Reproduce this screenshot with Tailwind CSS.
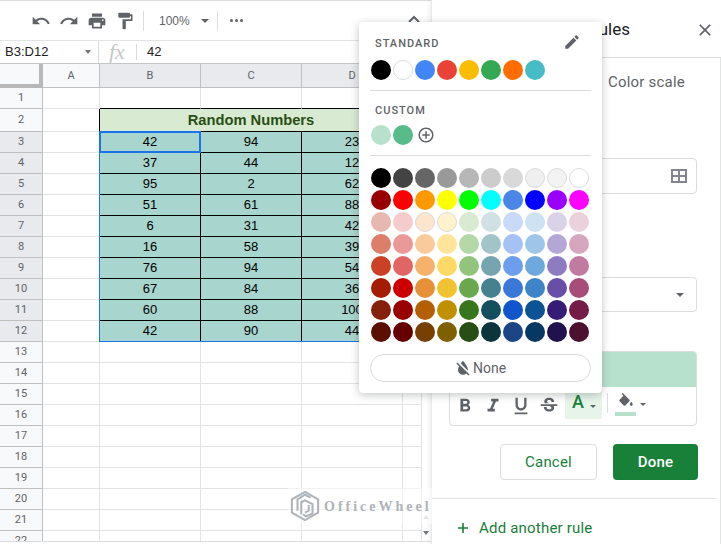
<!DOCTYPE html>
<html lang="en">
<head>
  <meta charset="UTF-8" />
  <title>Conditional format rules</title>
  <script src="https://cdn.jsdelivr.net/npm/@tailwindcss/browser@4"></script>
</head>
<body class="bg-white">
  <div class="relative flex w-[721px] h-[544px] overflow-hidden bg-white font-['Roboto',sans-serif] text-[#3c4043]">

    <!-- sheet side -->
    <div class="flex flex-col w-[431px] shrink-0">
      <!-- toolbar -->
      <div class="flex items-center h-[40px] border-t border-[#dadce0] text-[#5f6368]">
        <svg class="ml-[31px] w-[20px] h-[20px]" viewBox="0 0 24 24" fill="#5f6368"><path d="M12.5 8c-2.65 0-5.05.99-6.9 2.6L2 7v9h9l-3.62-3.62c1.39-1.16 3.16-1.88 5.12-1.88 3.54 0 6.55 2.31 7.6 5.5l2.37-.78C21.08 11.03 17.15 8 12.5 8z"/></svg>
        <svg class="ml-[8px] w-[20px] h-[20px]" viewBox="0 0 24 24" fill="#5f6368"><path d="M18.4 10.6C16.55 8.99 14.15 8 11.5 8c-4.65 0-8.58 3.03-9.96 7.22L3.9 16c1.05-3.19 4.05-5.5 7.6-5.5 1.95 0 3.73.72 5.12 1.88L13 16h9V7l-3.6 3.6z"/></svg>
        <svg class="ml-[8px] w-[20px] h-[20px]" viewBox="0 0 24 24" fill="#5f6368"><path d="M19 8H5c-1.66 0-3 1.34-3 3v6h4v4h12v-4h4v-6c0-1.66-1.34-3-3-3zm-3 11H8v-5h8v5zm3-7c-.55 0-1-.45-1-1s.45-1 1-1 1 .45 1 1-.45 1-1 1zm-1-9H6v4h12V3z"/></svg>
        <svg class="ml-[8px] w-[20px] h-[20px]" viewBox="0 0 24 24" fill="#5f6368"><path d="M18 4V3c0-.55-.45-1-1-1H5c-.55 0-1 .45-1 1v4c0 .55.45 1 1 1h12c.55 0 1-.45 1-1V6h1v4H9v11c0 .55.45 1 1 1h2c.55 0 1-.45 1-1v-9h8V4h-3z"/></svg>
        <div class="ml-[8px] w-px h-[20px] bg-[#dadce0]"></div>
        <span class="ml-[15px] w-[31px] text-[12px] font-['Liberation_Sans',sans-serif]">100%</span>
        <span class="ml-[11px] w-0 h-0 border-x-[4px] border-x-transparent border-t-[4px] border-t-[#5f6368] border-solid"></span>
        <div class="ml-[8px] w-px h-[20px] bg-[#dadce0]"></div>
        <span class="ml-[12px] flex gap-[2px]">
          <span class="w-[3px] h-[3px] rounded-full bg-[#5f6368]"></span>
          <span class="w-[3px] h-[3px] rounded-full bg-[#5f6368]"></span>
          <span class="w-[3px] h-[3px] rounded-full bg-[#5f6368]"></span>
        </span>
        <svg class="ml-[164px] mb-[3px] w-[14px] h-[14px]" viewBox="0 0 14 14" fill="none" stroke="#5f6368" stroke-width="2"><path d="M2 10l5-5 5 5"/></svg>
      </div>
      <!-- formula bar -->
      <div class="flex items-center h-[23px] border-t border-[#e2e3e3] text-[13px] font-['Liberation_Sans',sans-serif] text-[#202124]">
        <span class="ml-[5px] w-[80px]">B3:D12</span>
        <span class="w-0 h-0 border-x-[3px] border-x-transparent border-t-[4px] border-t-[#70757a] border-solid"></span>
        <div class="ml-[7px] w-px h-[22px] bg-[#dadce0]"></div>
        <span class="ml-[10px] w-[27px] text-[22px] leading-[22px] italic text-[#c4c6c8] font-['Liberation_Serif',serif]">fx</span>
        <div class="w-px h-[16px] bg-[#dadce0]"></div>
        <span class="ml-[10px]">42</span>
      </div>
      <!-- grid -->
      <div class="flex h-[478px] overflow-hidden border-t border-[#c4c7c5]">
        <div class="relative w-[421px] shrink-0">
          <div id="grid" class="grid grid-cols-[43px_57px_101px_101px_101px_19px] text-[13px] leading-[16px] font-['Liberation_Sans',sans-serif] text-[#000]"></div>
          <!-- selected range -->
          <div class="absolute left-[99px] top-[67px] w-[304px] h-[211px] border border-[#1a73e8] border-r-0 border-t-0"></div>
          <div class="absolute left-[99px] top-[67px] w-[102px] h-[22px] border-2 border-[#1a73e8]"></div>
        </div>
        <div class="flex flex-col items-center w-[10px] pt-[451px] gap-[12px]">
          <span class="w-0 h-0 border-x-[3px] border-x-transparent border-b-[4px] border-b-[#c4c7c5] border-solid"></span>
          <span class="w-0 h-0 border-x-[3px] border-x-transparent border-t-[4px] border-t-[#70757a] border-solid"></span>
        </div>
      </div>
      <div class="h-[3px] border-t border-[#dadce0]"></div>
    </div>

    <!-- right panel -->
    <div class="flex flex-col w-[290px] h-[544px] border-l border-[#e8eaed] shadow-[-2px_0_4px_rgba(60,64,67,0.08)]">
      <div class="flex items-center h-[58px] border-b border-[#dadce0]">
        <span class="mt-[3px] w-[198px] text-right text-[17px] text-[#202124] font-normal whitespace-nowrap">Conditional format rules</span>
        <svg class="ml-[65px] w-[20px] h-[20px] mt-[2px]" viewBox="0 0 24 24" fill="#5f6368"><path d="M19 6.41L17.59 5 12 10.59 6.41 5 5 6.41 10.59 12 5 17.59 6.41 19 12 13.41 17.59 19 19 17.59 13.41 12z"/></svg>
      </div>
      <div class="flex flex-col flex-1 border-r border-[#e2e3e3]">
        <div class="h-[46px] pl-[176px] pt-[14px] text-[15px] leading-[20px] tracking-[0.2px] text-[#5f6368]">Color scale</div>
        <!-- range input -->
        <div class="flex items-center justify-end ml-[17px] mt-[54px] w-[248px] h-[36px] pr-[8px] border border-[#dadce0] rounded">
          <svg class="w-[18px] h-[18px]" viewBox="0 0 18 18" fill="none" stroke="#80868b" stroke-width="2"><path d="M2 3h14v12H2zM9 3v12M2 9h14"/></svg>
        </div>
        <!-- condition select -->
        <div class="flex items-center justify-end ml-[17px] mt-[83px] w-[248px] h-[35px] pr-[12px] border border-[#dadce0] rounded">
          <span class="w-0 h-0 border-x-[4px] border-x-transparent border-t-[4px] border-t-[#5f6368] border-solid"></span>
        </div>
        <!-- formatting style -->
        <div class="ml-[17px] mt-[39px] w-[248px] h-[75px] border border-[#dadce0] rounded overflow-hidden">
          <div class="h-[35px] bg-[#b7e1cd]"></div>
          <div class="flex items-start h-[38px] text-[#5f6368]">
            <svg class="ml-[4px] mt-[8px] w-[22px] h-[22px]" viewBox="0 0 24 24" fill="#5f6368"><path d="M15.6 10.79c.97-.67 1.65-1.77 1.65-2.79 0-2.26-1.75-4-4-4H7v14h7.04c2.09 0 3.71-1.7 3.71-3.79 0-1.52-.86-2.82-2.15-3.42zM10 6.5h3c.83 0 1.5.67 1.5 1.5s-.67 1.5-1.5 1.5h-3v-3zm3.5 9H10v-3h3.5c.83 0 1.5.67 1.5 1.5s-.67 1.5-1.5 1.5z"/></svg>
            <svg class="ml-[6px] mt-[8px] w-[22px] h-[22px]" viewBox="0 0 24 24" fill="#5f6368"><path d="M10 4v3h2.21l-3.42 8H6v3h8v-3h-2.21l3.42-8H18V4z"/></svg>
            <svg class="ml-[6px] mt-[8px] w-[22px] h-[22px]" viewBox="0 0 24 24" fill="#5f6368"><path d="M12 17c3.31 0 6-2.69 6-6V3h-2.5v8c0 1.93-1.57 3.5-3.5 3.5S8.5 12.93 8.5 11V3H6v8c0 3.31 2.69 6 6 6zm-7 2v2h14v-2H5z"/></svg>
            <svg class="ml-[6px] mt-[8px] w-[22px] h-[22px]" viewBox="0 0 24 24" fill="#5f6368"><path d="M7.24 8.75c-.26-.48-.39-1.03-.39-1.67 0-.61.13-1.16.4-1.67.26-.5.63-.93 1.11-1.29.48-.35 1.05-.63 1.7-.83.66-.19 1.39-.29 2.18-.29.81 0 1.54.11 2.21.34.66.22 1.23.54 1.69.94.47.4.83.88 1.08 1.43.25.55.38 1.15.38 1.81h-3.01c0-.31-.05-.59-.15-.85-.09-.27-.24-.49-.44-.68-.2-.19-.45-.33-.75-.44-.3-.1-.66-.16-1.06-.16-.39 0-.74.04-1.03.13-.29.09-.53.21-.72.36-.19.16-.34.34-.44.55-.1.21-.15.43-.15.66 0 .48.25.88.74 1.21.38.25.77.48 1.41.7H7.39c-.05-.08-.11-.17-.15-.25zM21 12v-2H3v2h9.62c.18.07.4.14.55.2.37.17.66.34.87.51.21.17.35.36.43.57.07.2.11.43.11.69 0 .23-.05.45-.14.66-.09.2-.23.38-.42.53-.19.15-.42.26-.71.35-.29.08-.63.13-1.01.13-.43 0-.83-.04-1.18-.13s-.66-.23-.91-.42c-.25-.19-.45-.44-.59-.75-.14-.31-.25-.76-.25-1.21H6.4c0 .55.08 1.13.24 1.58.16.45.37.85.65 1.21.28.35.6.66.98.92.37.26.78.48 1.22.65.44.17.9.3 1.38.39.48.08.96.13 1.44.13.8 0 1.53-.09 2.18-.28s1.21-.45 1.67-.79c.46-.34.82-.77 1.07-1.27s.38-1.07.38-1.71c0-.6-.1-1.14-.31-1.61-.05-.11-.11-.23-.17-.33H21V12z"/></svg>
            <div class="ml-[5px] flex items-center h-[32px] w-[37px] pl-[7px] bg-[#e6f4ea] text-[#188038]">
              <span class="text-[18px] font-medium leading-[24px] mb-[3px] font-['Roboto',sans-serif]">A</span>
              <span class="ml-[6px] mt-[6px] w-0 h-0 border-x-[3px] border-x-transparent border-t-[3px] border-t-[#5f6368] border-solid"></span>
            </div>
            <div class="ml-[5px] mt-[6px] w-px h-[20px] bg-[#dadce0]"></div>
            <div class="ml-[7px] mt-[6px] flex flex-col w-[21px]">
              <svg class="ml-[2px] w-[18px] h-[18px]" viewBox="0 0 24 24" fill="#5f6368"><path d="M16.56 8.94L7.62 0 6.21 1.41l2.38 2.38-5.15 5.15c-.59.59-.59 1.54 0 2.12l5.5 5.5c.29.29.68.44 1.06.44s.77-.15 1.06-.44l5.5-5.5c.59-.58.59-1.53 0-2.12zM19 11.5s-2 2.17-2 3.5c0 1.1.9 2 2 2s2-.9 2-2c0-1.33-2-3.5-2-3.5z"/></svg>
              <span class="mt-[1px] h-[4px] bg-[#b7e1cd]"></span>
            </div>
            <span class="ml-[4px] mt-[16px] w-0 h-0 border-x-[3px] border-x-transparent border-t-[3px] border-t-[#5f6368] border-solid"></span>
          </div>
        </div>
        <!-- buttons -->
        <div class="flex ml-[68px] mt-[18px] gap-[16px]">
          <button class="w-[97px] h-[36px] border border-[#dadce0] rounded text-[15px] tracking-[0.2px] text-[#188038]">Cancel</button>
          <button class="w-[85px] h-[36px] rounded bg-[#188038] text-[15px] font-medium tracking-[0.2px] text-white">Done</button>
        </div>
        <div class="mt-[18px] w-[284px] border-t border-[#e2e3e3]"></div>
        <div class="flex items-center h-[20px] mt-[19px] pl-[23px] text-[15px] tracking-[0.2px] text-[#188038]">
          <svg class="w-[16px] h-[16px]" viewBox="0 0 16 16" fill="none" stroke="#188038" stroke-width="1.6"><path d="M8 3v10M3 8h10"/></svg>
          <span class="ml-[8px]">Add another rule</span>
        </div>
      </div>
    </div>

    <!-- watermark -->
    <div class="absolute left-[288px] top-[488px] flex items-center w-[144px] h-[36px] bg-white/50">
      <svg class="ml-[2px] w-[30px] h-[34px]" viewBox="0 0 32 34" fill="none" stroke="#afb4ba" stroke-width="2.2">
        <path d="M16 2L30 10V24L16 32L2 24V10Z"/>
        <path d="M22 8L16 5L8 10V22M12 26V13L16 11L24 15V25L17 28L14 26"/>
        <path d="M20 16V22L16 24"/>
      </svg>
      <span class="ml-[4px] text-[14px] font-bold tracking-[3px] text-[#aeb3b9] font-['Liberation_Serif',serif]">OfficeWheel</span>
    </div>

    <!-- colour menu -->
    <div class="absolute left-[359px] top-[22px] w-[243px] h-[371px] bg-white rounded shadow-[0_2px_8px_rgba(60,64,67,0.3)]">
      <div class="flex items-center justify-between h-[42px] pl-[16px] pr-[21px] pt-[3px]">
        <span class="text-[11px] font-medium tracking-[1px] text-[#5f6368]">STANDARD</span>
        <svg class="w-[18px] h-[18px] mb-[6px]" viewBox="0 0 24 24" fill="#5f6368"><path d="M3 17.25V21h3.75L17.81 9.94l-3.75-3.75L3 17.25zM20.71 7.04c.39-.39.39-1.02 0-1.41l-2.34-2.34c-.39-.39-1.02-.39-1.41 0l-1.83 1.83 3.75 3.75 1.83-1.83z"/></svg>
      </div>
      <div id="standard" class="flex gap-[2px] ml-[12px] h-[20px] mt-[-4px]"></div>
      <div class="ml-[11px] mt-[10px] w-[221px] border-t border-[#dadce0]"></div>
      <div class="h-[38px] pl-[16px] pt-[12px] text-[11px] leading-[15px] font-medium tracking-[1px] text-[#5f6368]">CUSTOM</div>
      <div class="flex items-center gap-[2px] ml-[12px] h-[20px] mt-[-4px]">
        <span class="w-[20px] h-[20px] rounded-full bg-[#b7e1cd]"></span>
        <span class="w-[20px] h-[20px] rounded-full bg-[#57bb8a]"></span>
        <svg class="ml-[2px] w-[18px] h-[18px]" viewBox="0 0 24 24" fill="#5f6368"><path d="M13 7h-2v4H7v2h4v4h2v-4h4v-2h-4V7zm-1-5C6.48 2 2 6.48 2 12s4.48 10 10 10 10-4.48 10-10S17.52 2 12 2zm0 18c-4.41 0-8-3.59-8-8s3.59-8 8-8 8 3.59 8 8-3.59 8-8 8z"/></svg>
      </div>
      <div class="ml-[11px] mt-[10px] w-[221px] border-t border-[#dadce0]"></div>
      <div id="palette" class="grid grid-cols-[repeat(10,20px)] gap-[2px] ml-[12px] mt-[12px]"></div>
      <button class="flex items-center justify-center ml-[11px] mt-[12px] w-[221px] h-[28px] border border-[#dadce0] rounded-full text-[14px] text-[#5f6368]">
        <svg class="ml-[-2px] w-[20px] h-[20px]" viewBox="0 0 24 24" fill="#5f6368"><path d="M18 14c0-4-6-10.8-6-10.8s-1.33 1.51-2.73 3.52l8.59 8.59c.09-.42.14-.86.14-1.31zm-.88 3.12L12.5 12.5 5.27 5.27 4 6.55l3.32 3.32C6.55 11.32 6 12.79 6 14c0 3.31 2.69 6 6 6 1.52 0 2.9-.57 3.96-1.5l2.63 2.63 1.27-1.27-2.74-2.74z"/></svg>
        <span>None</span>
      </button>
    </div>
  </div>

  <script>
    const gridEl = document.getElementById("grid");
    const data = [[42,94,23],[37,44,12],[95,2,62],[51,61,88],[6,31,42],[16,58,39],[76,94,54],[67,84,36],[60,88,100],[42,90,44]];
    const head = "flex items-center justify-center border-r border-b border-[#c0c0c0] text-[11px] font-['Roboto',sans-serif] text-[#5f6368]";
    const line = "border-r border-b border-[#e2e3e3]";
    let html = `
      <div class="h-[24px] border-r-4 border-b-4 border-[#b8b8b8] bg-[#f8f9fa]"></div>
      <div class="${head} bg-[#f8f9fa]">A</div>
      <div class="${head} bg-[#e8eaed]">B</div>
      <div class="${head} bg-[#e8eaed]">C</div>
      <div class="${head} bg-[#e8eaed]">D</div>
      <div class="${head} bg-[#f8f9fa]"></div>`;

    // row 1 sits on top of the black table border
    html += `
      <div class="${head} h-[21px] bg-[#f8f9fa]">1</div>
      <div class="${line}"></div>
      <div class="border-r border-b border-[#e2e3e3] border-b-black"></div>
      <div class="border-r border-b border-[#e2e3e3] border-b-black"></div>
      <div class="border-r border-b border-[#e2e3e3] border-b-black"></div>
      <div class="${line}"></div>`;

    html += `
      <div class="${head} h-[23px] bg-[#f8f9fa]">2</div>
      <div class="border-b border-r border-[#e2e3e3] border-r-black"></div>
      <div class="col-span-3 flex items-center justify-center border-r border-b border-black bg-[#d9ead3] text-[14.7px] font-bold text-[#274e13]">Random Numbers</div>
      <div class="${line}"></div>`;

    data.forEach((row, i) => {
      html += `
      <div class="${head} h-[21px] bg-[#e8eaed]">${i + 3}</div>
      <div class="border-b border-r border-[#e2e3e3] border-r-black"></div>`;
      row.forEach(v => {
        html += `<div class="flex items-center justify-center border-r border-b border-black bg-[#a8d5cd]">${v}</div>`;
      });
      html += `<div class="${line}"></div>`;
    });

    for (let n = 13; n <= 22; n++) {
      html += `
      <div class="${head} h-[21px] bg-[#f8f9fa]">${n}</div>
      <div class="${line}"></div><div class="${line}"></div><div class="${line}"></div><div class="${line}"></div><div class="${line}"></div>`;
    }
    gridEl.innerHTML = html;

    const dot = (c, ring) => `<span class="w-[20px] h-[20px] rounded-full ${ring ? "border border-[#dadce0]" : ""}" style="background:${c}"></span>`;
    document.getElementById("standard").innerHTML =
      ["#000000","#ffffff","#4285f4","#ea4335","#fbbc04","#34a853","#ff6d01","#46bdc6"].map(c => dot(c, c === "#ffffff")).join("");

    const palette = [
      "#000000 #434343 #666666 #999999 #b7b7b7 #cccccc #d9d9d9 #efefef #f3f3f3 #ffffff",
      "#980000 #ff0000 #ff9900 #ffff00 #00ff00 #00ffff #4a86e8 #0000ff #9900ff #ff00ff",
      "#e6b8af #f4cccc #fce5cd #fff2cc #d9ead3 #d0e0e3 #c9daf8 #cfe2f3 #d9d2e9 #ead1dc",
      "#dd7e6b #ea9999 #f9cb9c #ffe599 #b6d7a8 #a2c4c9 #a4c2f4 #9fc5e8 #b4a7d6 #d5a6bd",
      "#cc4125 #e06666 #f6b26b #ffd966 #93c47d #76a5af #6d9eeb #6fa8dc #8e7cc3 #c27ba0",
      "#a61c00 #cc0000 #e69138 #f1c232 #6aa84f #45818e #3c78d8 #3d85c6 #674ea7 #a64d79",
      "#85200c #990000 #b45f06 #bf9000 #38761d #134f5c #1155cc #0b5394 #351c75 #741b47",
      "#5b0f00 #660000 #783f04 #7f6000 #274e13 #0c343d #1c4587 #073763 #20124d #4c1130"
    ];
    const light = ["#efefef","#f3f3f3","#ffffff","#fce5cd","#fff2cc"];
    document.getElementById("palette").innerHTML =
      palette.join(" ").split(" ").map(c => dot(c, light.includes(c))).join("");
  </script>
</body>
</html>
